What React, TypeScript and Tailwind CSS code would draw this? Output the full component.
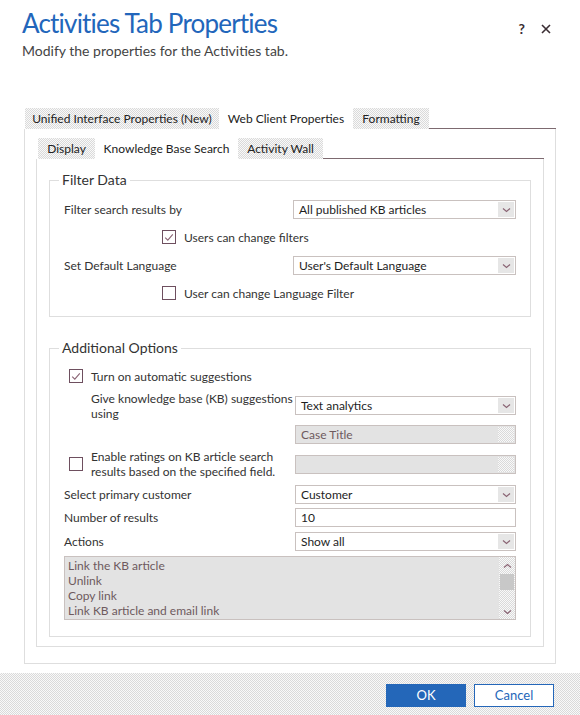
import React from 'react';

// dithered grey used by the inactive tabs, scroll areas and the footer
const DITHER =
  'bg-[image:repeating-conic-gradient(#dadada_0%_25%,#f9f9f9_0%_50%)] bg-size-[2px_2px]';

const Chevron = ({ up = false }: { up?: boolean }) => (
  <svg width="9" height="6" viewBox="0 0 9 6" className={up ? 'rotate-180' : ''}>
    <path d="M1 1.5 L4.5 4.5 L8 1.5" fill="none" stroke="#8a6474" strokeWidth="1.2" />
  </svg>
);

const Checkbox = ({ checked = false }: { checked?: boolean }) => (
  <span className="w-[14px] h-[14px] border border-[#6e4f5f] bg-white flex items-center justify-center shrink-0">
    {checked && (
      <svg width="10" height="9" viewBox="0 0 10 9">
        <path d="M1.2 4.6 L3.8 7.2 L8.8 1.4" fill="none" stroke="#8a6474" strokeWidth="1.1" />
      </svg>
    )}
  </span>
);

const Select = ({ value }: { value: string }) => (
  <div className="flex h-[19px] border border-[#c9c1bf] bg-white">
    <div className="flex-1 pl-[5px] text-[12px] leading-[17px] text-[#1e1e1e] whitespace-nowrap overflow-hidden">
      {value}
    </div>
    <div className="w-[16px] m-[1px] bg-[#e6e6e6] flex items-center justify-center">
      <Chevron />
    </div>
  </div>
);

const DisabledInput = ({ value = '' }: { value?: string }) => (
  <div className="flex h-[19px] border border-[#c9c1bf] bg-[#e3e3e3]">
    <div className="flex-1 pl-[5px] text-[12px] leading-[17px] text-[#6e5a5e] whitespace-nowrap">{value}</div>
    <div className={`w-[16px] m-[1px] ${DITHER}`} />
  </div>
);

const TextInput = ({ value }: { value: string }) => (
  <div className="h-[19px] border border-[#c9c1bf] bg-white pl-[5px] text-[12px] leading-[17px] text-[#1e1e1e]">
    {value}
  </div>
);

interface TabProps {
  label: string;
  width: string;
  active?: boolean;
}

const Tab: React.FC<TabProps> = ({ label, width, active }) => (
  <div
    className={`${width} h-[21px] flex items-center justify-center text-[12px] text-[#222] whitespace-nowrap ${
      active ? 'bg-white' : DITHER
    }`}
  >
    {label}
  </div>
);

const Label = ({ children }: { children: React.ReactNode }) => (
  <div className="text-[12px] leading-[15px] text-[#333] whitespace-nowrap">{children}</div>
);

const ACTIONS = ['Link the KB article', 'Unlink', 'Copy link', 'Link KB article and email link'];

const ActivitiesTabProperties: React.FC = () => {
  return (
    <div className="w-[580px] h-[715px] bg-white flex flex-col font-['Lato',sans-serif]">
      {/* Header */}
      <div className="flex justify-between items-start pl-[22px] pr-[29px] pt-[7px]">
        <div>
          <h1 className="text-[26px] leading-[32px] tracking-[-0.8px] text-[#2266bb]">Activities Tab Properties</h1>
          <p className="mt-[2px] text-[14px] leading-[20px] text-[#444]">Modify the properties for the Activities tab.</p>
        </div>
        <div className="flex items-center gap-[16px] mt-[12px] text-[#3a2d33]">
          <span className="text-[14px] font-bold leading-[20px]">?</span>
          <svg width="10" height="10" viewBox="0 0 10 10">
            <path d="M1 1 L9 9 M9 1 L1 9" stroke="#3a2d33" strokeWidth="1.6" />
          </svg>
        </div>
      </div>

      {/* Top level tabs */}
      <div className="mx-[24px] mt-[47px]">
        <div className="flex pl-[1px]">
          <Tab label="Unified Interface Properties (New)" width="w-[194px]" />
          <Tab label="Web Client Properties" width="w-[134px]" active />
          <Tab label="Formatting" width="w-[76px]" />
          <div className="flex-1 border-b border-[#7d6a70]" />
        </div>

        <div className="border-x border-b border-[#dedede] pt-[9px] px-[11px] pb-[16px]">
          {/* Second level tabs */}
          <div className="flex pl-[2px]">
            <Tab label="Display" width="w-[57px]" />
            <Tab label="Knowledge Base Search" width="w-[143px]" active />
            <Tab label="Activity Wall" width="w-[85px]" />
            <div className="flex-1 border-b border-[#7d6a70]" />
          </div>

          <div className="border-x border-b border-[#dedede] pt-[11px] pl-[12px] pr-[12px] pb-[9px]">
            {/* Filter Data */}
            <fieldset className="border border-[#dedede] px-[14px] pb-[15px]">
              <legend className="-ml-[5px] px-[3px] text-[14px] leading-[20px] text-[#333]">Filter Data</legend>
              <div className="pt-[10px]">
                <div className="flex items-center">
                  <div className="w-[229px]">
                    <Label>Filter search results by</Label>
                  </div>
                  <div className="w-[223px]">
                    <Select value="All published KB articles" />
                  </div>
                </div>
                <div className="flex items-center h-[16px] mt-[10px] pl-[98px] gap-[8px]">
                  <Checkbox checked />
                  <Label>Users can change filters</Label>
                </div>
                <div className="flex items-center mt-[11px]">
                  <div className="w-[229px]">
                    <Label>Set Default Language</Label>
                  </div>
                  <div className="w-[223px]">
                    <Select value="User's Default Language" />
                  </div>
                </div>
                <div className="flex items-center h-[16px] mt-[10px] pl-[98px] gap-[8px]">
                  <Checkbox />
                  <Label>User can change Language Filter</Label>
                </div>
              </div>
            </fieldset>

            {/* Additional Options */}
            <fieldset className="mt-[21px] border border-[#dedede] px-[14px] pb-[16px]">
              <legend className="-ml-[5px] px-[3px] text-[14px] leading-[20px] text-[#333]">Additional Options</legend>
              <div className="pt-[10px]">
                <div className="flex items-center h-[16px] pl-[5px] gap-[8px]">
                  <Checkbox checked />
                  <Label>Turn on automatic suggestions</Label>
                </div>

                <div className="flex items-start mt-[7px]">
                  <div className="w-[231px] pl-[27px]">
                    <Label>
                      Give knowledge base (KB) suggestions
                      <br />
                      using
                    </Label>
                  </div>
                  <div className="w-[221px] mt-[5px]">
                    <Select value="Text analytics" />
                  </div>
                </div>

                <div className="flex mt-[4px]">
                  <div className="w-[231px]" />
                  <div className="w-[221px]">
                    <DisabledInput value="Case Title" />
                  </div>
                </div>

                <div className="flex items-center mt-[5px]">
                  <div className="w-[231px] flex items-center pl-[5px] gap-[8px]">
                    <Checkbox />
                    <Label>
                      Enable ratings on KB article search
                      <br />
                      results based on the specified field.
                    </Label>
                  </div>
                  <div className="w-[221px]">
                    <DisabledInput />
                  </div>
                </div>

                <div className="flex items-center mt-[6px]">
                  <div className="w-[231px]">
                    <Label>Select primary customer</Label>
                  </div>
                  <div className="w-[221px]">
                    <Select value="Customer" />
                  </div>
                </div>

                <div className="flex items-center mt-[4px]">
                  <div className="w-[231px]">
                    <Label>Number of results</Label>
                  </div>
                  <div className="w-[221px]">
                    <TextInput value="10" />
                  </div>
                </div>

                <div className="flex items-center mt-[5px]">
                  <div className="w-[231px]">
                    <Label>Actions</Label>
                  </div>
                  <div className="w-[221px]">
                    <Select value="Show all" />
                  </div>
                </div>

                {/* Actions list */}
                <div className="flex h-[64px] mt-[5px] border border-[#c9c1bf] bg-[#e3e3e3]">
                  <div className="flex-1 pl-[3px] pt-[1px] text-[12px] leading-[15px] text-[#6e5a5e]">
                    {ACTIONS.map((a) => (
                      <div key={a}>{a}</div>
                    ))}
                  </div>
                  <div className={`w-[16px] flex flex-col items-center ${DITHER}`}>
                    <div className="h-[17px] flex items-center justify-center">
                      <Chevron up />
                    </div>
                    <div className="w-[14px] h-[16px] bg-[#c8c8c8]" />
                    <div className="flex-1" />
                    <div className="h-[14px] flex items-center justify-center">
                      <Chevron />
                    </div>
                  </div>
                </div>
              </div>
            </fieldset>
          </div>
        </div>
      </div>

      {/* Footer */}
      <div className={`mt-auto h-[42px] flex justify-end items-start gap-[8px] pt-[11px] pr-[26px] ${DITHER}`}>
        <button className="w-[80px] h-[23px] bg-[#2467b9] text-white text-[13px] leading-[23px]">OK</button>
        <button className="w-[80px] h-[23px] bg-white border border-[#2467b9] text-[#2467b9] text-[13px] leading-[21px]">
          Cancel
        </button>
      </div>
    </div>
  );
};

export default ActivitiesTabProperties;
